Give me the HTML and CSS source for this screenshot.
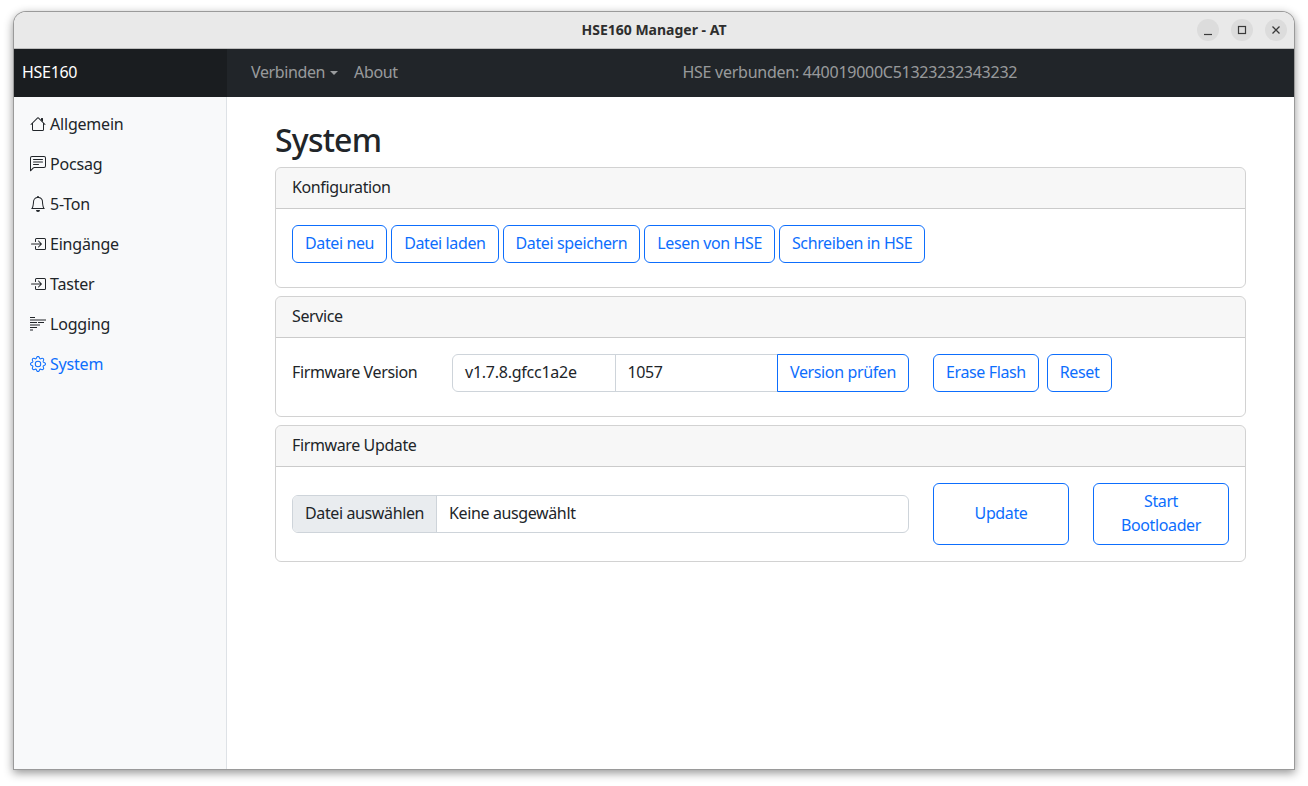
FILE: index.html
```html
<!DOCTYPE html>
<html lang="de">
<head>
<meta charset="utf-8">
<title>HSE160 Manager - AT</title>
<link rel="stylesheet" href="styles.css">
</head>
<body>
<div class="window">
  <header class="titlebar">
    <span class="title">HSE160 Manager - AT</span>
    <div class="controls">
      <span class="ctl"><svg width="24" height="24" viewBox="0 0 24 24"><path d="M8 16.500h8" stroke="#3a3a3a" stroke-width="1.200" fill="none"/></svg></span>
      <span class="ctl"><svg width="24" height="24" viewBox="0 0 24 24"><rect x="8.500" y="8.500" width="7" height="7" stroke="#3a3a3a" stroke-width="1.200" fill="none"/></svg></span>
      <span class="ctl"><svg width="24" height="24" viewBox="0 0 24 24"><path d="M8.500 8.500l7 7M15.500 8.500l-7 7" stroke="#3a3a3a" stroke-width="1.300" fill="none"/></svg></span>
    </div>
  </header>
  <nav class="navbar">
    <a class="brand">HSE160</a>
    <div class="navlinks">
      <a class="navlink">Verbinden<i class="caret"></i></a>
      <a class="navlink">About</a>
    </div>
    <span class="status">HSE verbunden: 440019000C51323232343232</span>
  </nav>
  <div class="content">
    <aside class="sidebar">
      <a class="side"><svg class="ico" viewBox="0 0 16 16"><path d="M2 13.500V7h1v6.500a.5.5 0 0 0 .5.5h9a.5.5 0 0 0 .5-.5V7h1v6.500a1.500 1.500 0 0 1-1.500 1.500h-9A1.500 1.500 0 0 1 2 13.500zm11-11V6l-2-2V2.500a.5.500 0 0 1 .5-.5h1a.5.500 0 0 1 .5.500z"/><path d="M7.293 1.500a1 1 0 0 1 1.414 0l6.647 6.646a.5.500 0 0 1-.708.708L8 2.207 1.354 8.854a.5.500 0 1 1-.708-.708L7.293 1.500z"/></svg>Allgemein</a>
      <a class="side"><svg class="ico" viewBox="0 0 16 16"><path d="M14 1a1 1 0 0 1 1 1v8a1 1 0 0 1-1 1H4.414A2 2 0 0 0 3 11.586l-2 2V2a1 1 0 0 1 1-1h12zM2 0a2 2 0 0 0-2 2v12.793a.5.5 0 0 0 .854.353l2.853-2.853A1 1 0 0 1 4.414 12H14a2 2 0 0 0 2-2V2a2 2 0 0 0-2-2H2z"/><path d="M3 3.500a.5.5 0 0 1 .5-.5h9a.5.5 0 0 1 0 1h-9a.5.5 0 0 1-.5-.5zM3 6a.5.5 0 0 1 .5-.5h9a.5.5 0 0 1 0 1h-9A.5.5 0 0 1 3 6zm0 2.500a.5.5 0 0 1 .5-.5h5a.5.5 0 0 1 0 1h-5a.5.5 0 0 1-.5-.5z"/></svg>Pocsag</a>
      <a class="side"><svg class="ico" viewBox="0 0 16 16"><path d="M8 16a2 2 0 0 0 2-2H6a2 2 0 0 0 2 2zM8 1.918l-.797.161A4.002 4.002 0 0 0 4 6c0 .628-.134 2.197-.459 3.742-.16.767-.376 1.566-.663 2.258h10.244c-.287-.692-.502-1.490-.663-2.258C12.134 8.197 12 6.628 12 6a4.002 4.002 0 0 0-3.203-3.920L8 1.917zM14.220 12c.223.447.481.801.780 1H1c.299-.199.557-.553.780-1C2.680 10.200 3 6.880 3 6c0-2.420 1.720-4.440 4.005-4.901a1 1 0 1 1 1.990 0A5.002 5.002 0 0 1 13 6c0 .88.320 4.200 1.220 6z"/></svg>5-Ton</a>
      <a class="side"><svg class="ico" viewBox="0 0 16 16"><path fill-rule="evenodd" d="M6 3.500a.5.500 0 0 1 .5-.5h8a.5.500 0 0 1 .5.500v9a.5.500 0 0 1-.5.500h-8a.5.500 0 0 1-.5-.5v-2a.5.500 0 0 0-1 0v2A1.500 1.500 0 0 0 6.500 14h8a1.500 1.500 0 0 0 1.500-1.500v-9A1.500 1.500 0 0 0 14.500 2h-8A1.500 1.500 0 0 0 5 3.500v2a.5.500 0 0 0 1 0v-2z"/><path fill-rule="evenodd" d="M11.854 8.354a.5.500 0 0 0 0-.708l-3-3a.5.500 0 1 0-.708.708L10.293 7.500H1.500a.5.500 0 0 0 0 1h8.793l-2.147 2.146a.5.500 0 0 0 .708.708l3-3z"/></svg>Eingänge</a>
      <a class="side"><svg class="ico" viewBox="0 0 16 16"><path fill-rule="evenodd" d="M6 3.500a.5.500 0 0 1 .5-.5h8a.5.500 0 0 1 .5.500v9a.5.500 0 0 1-.5.500h-8a.5.500 0 0 1-.5-.5v-2a.5.500 0 0 0-1 0v2A1.500 1.500 0 0 0 6.500 14h8a1.500 1.500 0 0 0 1.500-1.500v-9A1.500 1.500 0 0 0 14.500 2h-8A1.500 1.500 0 0 0 5 3.500v2a.5.500 0 0 0 1 0v-2z"/><path fill-rule="evenodd" d="M11.854 8.354a.5.500 0 0 0 0-.708l-3-3a.5.500 0 1 0-.708.708L10.293 7.500H1.500a.5.500 0 0 0 0 1h8.793l-2.147 2.146a.5.500 0 0 0 .708.708l3-3z"/></svg>Taster</a>
      <a class="side"><svg class="ico" viewBox="0 0 16 16"><path d="M0 1h5v1H0zM0 3.500h16v1H0zM0 6h7v1H0zM8 6h6v1H8zM0 8.500h10v1H0zM0 11h7v1H0zM0 13.500h3v1H0z"/></svg>Logging</a>
      <a class="side active"><svg class="ico" viewBox="0 0 16 16"><path d="M8 4.754a3.246 3.246 0 1 0 0 6.492 3.246 3.246 0 0 0 0-6.492zM5.754 8a2.246 2.246 0 1 1 4.492 0 2.246 2.246 0 0 1-4.492 0z"/><path d="M9.796 1.343c-.527-1.790-3.065-1.790-3.592 0l-.094.319a.873.873 0 0 1-1.255.520l-.292-.160c-1.640-.892-3.433.902-2.540 2.541l.159.292a.873.873 0 0 1-.520 1.255l-.319.094c-1.790.527-1.790 3.065 0 3.592l.319.094a.873.873 0 0 1 .520 1.255l-.160.292c-.892 1.640.901 3.434 2.541 2.540l.292-.159a.873.873 0 0 1 1.255.520l.094.319c.527 1.790 3.065 1.790 3.592 0l.094-.319a.873.873 0 0 1 1.255-.520l.292.160c1.640.893 3.434-.902 2.540-2.541l-.159-.292a.873.873 0 0 1 .520-1.255l.319-.094c1.790-.527 1.790-3.065 0-3.592l-.319-.094a.873.873 0 0 1-.520-1.255l.160-.292c.893-1.640-.902-3.433-2.541-2.540l-.292.159a.873.873 0 0 1-1.255-.520l-.094-.319zm-2.633.283c.246-.835 1.428-.835 1.674 0l.094.319a1.873 1.873 0 0 0 2.693 1.115l.291-.160c.764-.415 1.600.420 1.184 1.185l-.159.292a1.873 1.873 0 0 0 1.116 2.692l.318.094c.835.246.835 1.428 0 1.674l-.319.094a1.873 1.873 0 0 0-1.115 2.693l.160.291c.415.764-.420 1.600-1.185 1.184l-.291-.159a1.873 1.873 0 0 0-2.693 1.116l-.094.318c-.246.835-1.428.835-1.674 0l-.094-.319a1.873 1.873 0 0 0-2.692-1.115l-.292.160c-.764.415-1.600-.420-1.184-1.185l.159-.291A1.873 1.873 0 0 0 1.945 8.930l-.319-.094c-.835-.246-.835-1.428 0-1.674l.319-.094A1.873 1.873 0 0 0 3.060 4.377l-.160-.292c-.415-.764.420-1.600 1.185-1.184l.292.159a1.873 1.873 0 0 0 2.692-1.115l.094-.319z"/></svg>System</a>
    </aside>
    <main class="main">
      <h2 class="heading">System</h2>
      <section class="card">
        <div class="card-header">Konfiguration</div>
        <div class="card-body">
          <div class="btnrow">
            <button class="btn">Datei neu</button>
            <button class="btn">Datei laden</button>
            <button class="btn">Datei speichern</button>
            <button class="btn">Lesen von HSE</button>
            <button class="btn">Schreiben in HSE</button>
          </div>
        </div>
      </section>
      <section class="card">
        <div class="card-header">Service</div>
        <div class="card-body">
          <div class="svcrow">
            <label class="svclabel">Firmware Version</label>
            <div class="group">
              <span class="gfield gf1">v1.7.8.gfcc1a2e</span>
              <span class="gfield gf2">1057</span>
              <button class="btn gbtn">Version prüfen</button>
            </div>
            <div class="svcbtns">
              <button class="btn">Erase Flash</button>
              <button class="btn">Reset</button>
            </div>
          </div>
        </div>
      </section>
      <section class="card">
        <div class="card-header">Firmware Update</div>
        <div class="card-body updbody">
          <div class="filefield"><span class="filebtn">Datei auswählen</span><span class="filename">Keine ausgewählt</span></div>
          <button class="btn bigbtn updbtn">Update</button>
          <button class="btn bigbtn">Start Bootloader</button>
        </div>
      </section>
    </main>
  </div>
</div>
</body>
</html>
```

FILE: styles.css
```css
* { box-sizing: border-box; }
html, body { margin: 0; height: 100%; background: #fff; }
body {
  padding: 12px 14px 17px 14px;
  font-family: "Noto Sans", "Open Sans", sans-serif;
  font-size: 16px;
  line-height: 24px;
  letter-spacing: -.38px;
  color: #212529;
  overflow: hidden;
}
.window {
  height: 757px;
  display: flex;
  flex-direction: column;
  border-radius: 12px 12px 0 0;
  background: #fff;
  box-shadow: 0 0 0 1px #9a9a9a, 0 3px 10px 1px rgba(0,0,0,.42);
}
.titlebar {
  height: 37px;
  flex: none;
  background: #e9e9e9;
  border-radius: 12px 12px 0 0;
  border-bottom: 1px solid #bdbdbd;
  display: flex;
  align-items: center;
  justify-content: flex-end;
  position: relative;
  padding-right: 7px;
}
.title {
  position: absolute;
  left: 0; right: 0;
  top: 6px;
  text-align: center;
  font-size: 14px;
  font-weight: 700;
  letter-spacing: 0;
  color: #2e2e2e;
}
.controls { display: flex; gap: 12px; }
.ctl {
  width: 22px; height: 22px;
  border-radius: 50%;
  background: #dcdcdc;
  display: flex; align-items: center; justify-content: center;
}
.ctl svg { flex: none; }
.navbar {
  height: 48px;
  flex: none;
  background: #212529;
  display: flex;
  align-items: center;
}
.brand {
  width: 213px;
  height: 100%;
  flex: none;
  background: #1a1d20;
  color: #fff;
  padding: 11px 8px 13px;
  letter-spacing: -.3px;
}
.navlinks { display: flex; padding-left: 16px; flex: none; }
.navlink { color: rgba(255,255,255,.55); padding: 0 8px 2px; display: flex; align-items: center; }
.caret {
  display: inline-block;
  margin: 2px 0 0 5px;
  border-top: 4.8px solid currentColor;
  border-left: 4.8px solid transparent;
  border-right: 4.8px solid transparent;
}
.status {
  flex: 1;
  text-align: center;
  padding-bottom: 2px;
  letter-spacing: -.26px;
  color: rgba(255,255,255,.55);
}
.content { flex: 1; display: flex; min-height: 0; }
.sidebar {
  width: 213px;
  flex: none;
  background: #f8f9fa;
  border-right: 1px solid #dee2e6;
  padding: 7px 0;
}
.side {
  display: flex;
  align-items: center;
  height: 40px;
  padding: 0 16px;
  letter-spacing: -.2px;
  color: #212529;
}
.side.active { color: #0d6efd; }
.ico { width: 16px; height: 16px; margin-right: 4px; flex: none; fill: currentColor; }
.main { flex: 1; padding: 24px 48px; min-width: 0; }
.heading {
  margin: 0 0 8px;
  font-size: 32px;
  line-height: 38px;
  font-weight: 500;
  letter-spacing: -.8px;
}
.card {
  border: 1px solid rgba(0,0,0,.176);
  border-radius: 6px;
  margin-bottom: 8px;
  overflow: hidden;
}
.card-header {
  height: 41px;
  padding: 7px 16px 9px;
  background: rgba(0,0,0,.03);
  border-bottom: 1px solid rgba(0,0,0,.176);
}
.card-body { padding: 16px; }
.btn {
  font: inherit;
  letter-spacing: inherit;
  height: 38px;
  padding: 4px 12px 6px;
  border: 1px solid #0d6efd;
  border-radius: 6px;
  background: transparent;
  color: #0d6efd;
  white-space: nowrap;
}
.btnrow { display: flex; gap: 4px; margin-bottom: 8px; }
.svcrow { display: flex; align-items: center; margin-bottom: 8px; }
.svclabel { width: 160px; flex: none; padding-bottom: 2px; }
.group { display: flex; width: 457px; flex: none; }
.gfield {
  height: 38px;
  padding: 5px 12px 7px;
  border: 1px solid #ced4da;
  flex: 1 1 0;
  min-width: 0;
  white-space: nowrap;
}
.gf1 { border-radius: 6px 0 0 6px; letter-spacing: -.25px; }
.gf2 { margin-left: -1px; }
.gbtn { margin-left: -1px; border-radius: 0 6px 6px 0; flex: none; width: 132px; padding: 4px 0 6px; }
.svcbtns { display: flex; gap: 8px; margin-left: 24px; }
.updbody { display: flex; align-items: center; padding-bottom: 16px; }
.filefield {
  width: 617px;
  height: 38px;
  flex: none;
  display: flex;
  border: 1px solid #ced4da;
  border-radius: 6px;
  overflow: hidden;
}
.filebtn { background: #e9ecef; border-right: 1px solid #ced4da; padding: 5px 12px 7px; height: 36px; line-height: 24px; white-space: nowrap; }
.filename { padding: 5px 12px 7px; line-height: 24px; }
.bigbtn { width: 136px; height: 62px; white-space: normal; padding: 4px 12px 6px; }
.updbtn { margin: 0 24px; }
```
